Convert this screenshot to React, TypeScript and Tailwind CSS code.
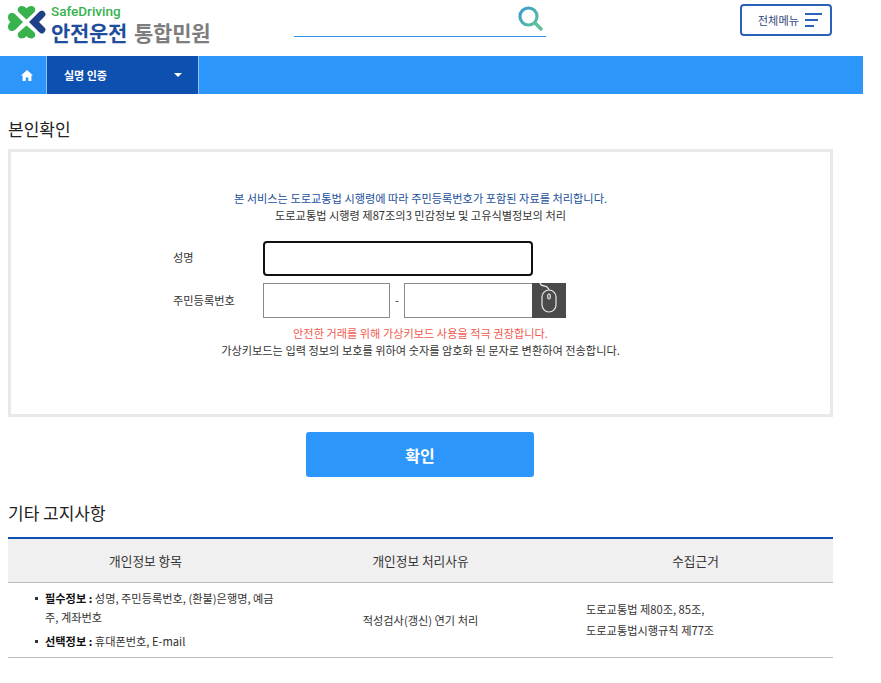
import React from "react"

const FONT = "font-['Noto_Sans_CJK_KR','Noto_Sans',sans-serif]"

function Logo() {
  return (
    <svg width="38" height="33" viewBox="0 0 38 33" className="shrink-0">
      <path d="M18.5 13.5 L11 6.5 C8.5 4 10 0 13.5 0 C16 0 17.5 1 18.5 2.5 C19.5 1 21 0 23.5 0 C27 0 28.5 4 26 6.5Z" fill="#37b24d" />
      <path d="M18.5 19.5 L11 26 C8.5 28.5 10 32.5 13.5 32.5 C16 32.5 17.5 31.5 18.5 30 C19.5 31.5 21 32.5 23.5 32.5 C27 32.5 28.5 28.5 26 26Z" fill="#37b24d" />
      <path d="M15 16 L7.5 8.5 C4 5.5 0 7.5 0 11 C0 13 1 15 2.5 16 C1 17 0 19 0 21 C0 24.5 4 26.5 7.5 23.5Z" fill="#37b24d" />
      <path d="M21 16 L31 6 C33 4 35 4 36.5 6 C38 8 38 9 36 11 L31 16 L36 21 C38 23 38 24 36.5 26 C35 28 33 28 31 26Z" fill="#1f3f86" />
    </svg>
  )
}

function Header() {
  return (
    <header className="h-14 flex items-start bg-white">
      <div className="w-[294px] pl-2 flex items-start gap-[5px] pt-[6px]">
        <Logo />
        <div className="flex flex-col">
          <span className="text-[13.5px] leading-[13px] font-medium text-[#37b24d] font-['Roboto',sans-serif] -mt-[1px]">
            SafeDriving
          </span>
          <div className="flex gap-[7px] mt-[1px]">
            <span className="text-[21px] leading-[26px] font-bold text-[#1f4e9c] tracking-[-0.3px]">안전운전</span>
            <span className="text-[21px] leading-[26px] font-bold text-[#7d7d7d] tracking-[-0.3px]">통합민원</span>
          </div>
        </div>
      </div>
      <div className="w-[252px] h-[37px] border-b border-[#2c8fe8] flex justify-end pr-[3px] pt-[6px]">
        <svg width="25" height="25" viewBox="0 0 25 25">
          <defs>
            <linearGradient id="sg" x1="0" y1="0" x2="1" y2="1">
              <stop offset="0" stopColor="#3a9bd0" />
              <stop offset="1" stopColor="#5cc09a" />
            </linearGradient>
          </defs>
          <circle cx="10.5" cy="10.5" r="8.5" fill="none" stroke="url(#sg)" strokeWidth="3.2" />
          <path d="M17 17 L23 23" stroke="#5cc09a" strokeWidth="3.4" strokeLinecap="round" />
        </svg>
      </div>
      <button className="ml-[194px] mt-1 w-[92px] h-8 border-2 border-[#2a62b8] rounded-[4px] flex items-center justify-end pr-[8px] gap-[6px] text-[11.2px] text-[#34477e]">
        <span>전체메뉴</span>
        <span className="flex flex-col gap-[4px]">
          <span className="block w-[17px] h-[2px] bg-[#2a62b8]" />
          <span className="block w-[13px] h-[2px] bg-[#2a62b8]" />
          <span className="block w-[9px] h-[2px] bg-[#2a62b8]" />
        </span>
      </button>
    </header>
  )
}

function Nav() {
  return (
    <nav className="h-[38px] bg-[#2c96fa] flex">
      <div className="w-[47px] border-r border-[#8cc4f8] flex items-center justify-center pl-[7px]">
        <svg width="12" height="11" viewBox="0 0 12 11" fill="#fff">
          <path d="M6 0 L12 5.6 L10.4 5.6 L10.4 11 L7.3 11 L7.3 7.4 L4.7 7.4 L4.7 11 L1.6 11 L1.6 5.6 L0 5.6Z" />
        </svg>
      </div>
      <div className="w-[152px] bg-[#0d50b0] border-r border-[#8cc4f8] flex items-center justify-between pl-[17px] pr-[16px] text-white text-[11px] font-bold">
        <span>실명 인증</span>
        <span className="w-0 h-0 border-x-[4px] border-x-transparent border-t-[4px] border-t-white" />
      </div>
    </nav>
  )
}

function MouseButton() {
  return (
    <div className="w-[34px] h-[35px] bg-[#4a4a4a] flex items-center justify-center">
      <svg width="34" height="35" viewBox="0 0 34 35" fill="none" stroke="#e8e8e8" strokeWidth="1.2">
        <path d="M8 0 C9 4 13 2 15 4 C16.5 5.5 17 6 17 7" />
        <rect x="10" y="7" width="14" height="22" rx="7" />
        <rect x="15.8" y="11" width="2.4" height="5" rx="1.2" />
      </svg>
    </div>
  )
}

function IdentityBox() {
  return (
    <div className="mx-2 w-[825px] h-[268px] border-[3px] border-[#e9e9e9] pt-[38px] text-[11.2px] text-[#333]">
      <p className="text-center leading-[17px] text-[#1b4f9c]">본 서비스는 도로교통법 시행령에 따라 주민등록번호가 포함된 자료를 처리합니다.</p>
      <p className="text-center leading-[17px]">도로교통법 시행령 제87조의3 민감정보 및 고유식별정보의 처리</p>
      <div className="mt-[17px] ml-[162px] flex flex-col gap-[7px]">
        <div className="flex items-center">
          <span className="w-[90px] -mt-[2px]">성명</span>
          <div className="w-[270px] h-[35px] border-2 border-[#111] rounded-[4px] bg-white" />
        </div>
        <div className="flex items-center">
          <span className="w-[90px]">주민등록번호</span>
          <div className="w-[127px] h-[35px] border border-[#8a8a8a]" />
          <span className="w-[14px] text-center">-</span>
          <div className="w-[128px] h-[35px] border border-[#8a8a8a] border-r-0" />
          <MouseButton />
        </div>
      </div>
      <p className="mt-[7px] text-center leading-[17px] text-[#f25a4f]">안전한 거래를 위해 가상키보드 사용을 적극 권장합니다.</p>
      <p className="text-center leading-[17px]">가상키보드는 입력 정보의 보호를 위하여 숫자를 암호화 된 문자로 변환하여 전송합니다.</p>
    </div>
  )
}

function NoticeTable() {
  return (
    <div className="mx-2 w-[825px] border-t-2 border-[#0d50b0] text-[#333]">
      <div className="grid grid-cols-3 h-11 bg-[#f0f0f0] border-b border-[#bbb] items-center text-center text-[12.7px]">
        <div>개인정보 항목</div>
        <div>개인정보 처리사유</div>
        <div>수집근거</div>
      </div>
      <div className="grid grid-cols-3 h-[75px] border-b border-[#bbb] items-center text-[11.2px]">
        <ul className="pl-[37px] pr-[8px] leading-[19px] list-none">
          <li className="relative mb-[5px]">
            <span className="absolute -left-[10px] top-[8px] w-[3px] h-[3px] bg-[#333]" />
            <b className="text-[#111]">필수정보 :</b> 성명, 주민등록번호, (환불)은행명, 예금주, 계좌번호
          </li>
          <li className="relative">
            <span className="absolute -left-[10px] top-[8px] w-[3px] h-[3px] bg-[#333]" />
            <b className="text-[#111]">선택정보 :</b> 휴대폰번호, E-mail
          </li>
        </ul>
        <div className="text-center">적성검사(갱신) 연기 처리</div>
        <div className="pl-[28px] leading-[21px]">
          도로교통법 제80조, 85조,
          <br />
          도로교통법시행규칙 제77조
        </div>
      </div>
    </div>
  )
}

export default function App() {
  return (
    <div className={`w-[863px] h-[683px] overflow-hidden bg-white ${FONT}`}>
      <Header />
      <Nav />
      <h2 className="mt-[23px] ml-2 text-[17px] leading-6 text-[#222]">본인확인</h2>
      <div className="h-[8px]" />
      <IdentityBox />
      <button className="block mt-[15px] ml-[306px] w-[228px] h-[45px] rounded-[3px] bg-[#2c96fa] text-white text-[16px] font-bold">
        확인
      </button>
      <h2 className="mt-[24px] ml-2 text-[17px] leading-6 text-[#222]">기타 고지사항</h2>
      <div className="h-[12px]" />
      <NoticeTable />
    </div>
  )
}
